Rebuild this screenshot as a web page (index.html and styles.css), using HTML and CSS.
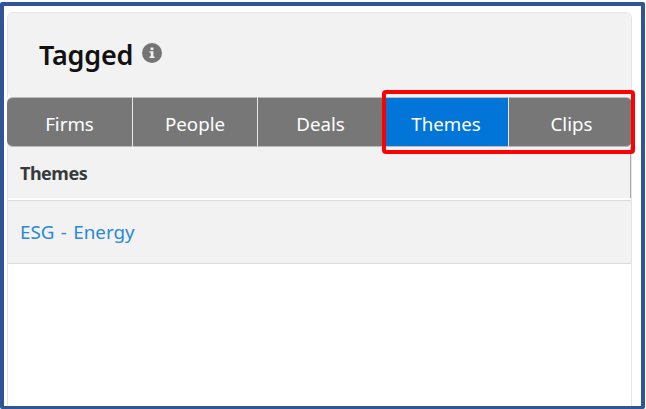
FILE: index.html
```html
<!DOCTYPE html>
<html lang="en">
<head>
<meta charset="utf-8">
<title>Tagged</title>
<link rel="stylesheet" href="styles.css">
</head>
<body>
<main class="frame">
  <section class="card">
    <header class="card-header">
      <h1 class="title">Tagged</h1>
      <svg class="info" viewBox="0 0 20 20" aria-hidden="true">
        <circle cx="10" cy="10" r="10" fill="#747474"/>
        <path d="M8.6 4.6h2.8v2.3H8.6zM7.5 8.2h3.9v5.3h1.2v1.6H7.5v-1.6h1.3V9.8H7.5z" fill="#f2f2f2"/>
      </svg>
    </header>
    <nav class="tabs">
      <a class="tab">Firms</a>
      <a class="tab">People</a>
      <a class="tab">Deals</a>
      <a class="tab active">Themes</a>
      <a class="tab">Clips</a>
      <span class="highlight"></span>
    </nav>
    <div class="column-head">Themes</div>
    <div class="row"><a class="link">ESG - Energy</a></div>
  </section>
</main>
</body>
</html>
```
FILE: styles.css
```css
* { box-sizing: border-box; }
body {
  margin: 0;
  height: 409px;
  padding: 2px 1px 0 0;
  overflow: hidden;
  background: #fff;
  font-family: "Noto Sans", "Open Sans", sans-serif;
}
.frame {
  height: 407px;
  padding: 6px 9px 0 3px;
  border: 4px solid #2f5597;
  border-bottom-width: 3px;
  border-radius: 2px;
}
.card {
  height: 394px;
  border: solid #e4e4e4;
  border-width: 1px 1px 0;
  border-radius: 6px 6px 0 0;
}
.card-header {
  display: flex;
  align-items: flex-start;
  height: 84px;
  padding: 23px 0 0 31px;
  background: #f2f2f2;
  border-radius: 5px;
}
.title {
  margin: 0;
  color: #111;
  font-size: 27px;
  font-weight: 650;
  letter-spacing: -0.2px;
  line-height: 38px;
}
.info {
  width: 20px;
  height: 20px;
  margin: 7px 0 0 9px;
}
.tabs {
  position: relative;
  display: grid;
  grid-template-columns: 126px 125px 126px 125px 123px;
  grid-template-rows: 50px;
  height: 50px;
  margin: 0 -1px;
  background: #f2f2f2;
}
.tab {
  padding-top: 1px;
  height: 50px;
  background: #777;
  border: solid #bbb;
  border-width: 1px 1px 1px 0;
  border-right-color: #e8e8e8;
  color: #fff;
  font-size: 18.7px;
  line-height: 50px;
  text-align: center;
}
.tab:first-of-type { border-radius: 6px 0 0 6px; }
.tab:last-of-type { border-radius: 0 6px 6px 0; border-right: 0; padding-left: 2px; }
.tab.active { background: #0275d8; }
.highlight {
  position: absolute;
  top: -7px;
  left: 375px;
  width: 253px;
  height: 64px;
  border: 4px solid #f00;
  border-radius: 4px;
}
.column-head {
  height: 51px;
  padding-left: 12px;
  background: #f2f2f2;
  border-right: 1px solid #aaa;
  color: #373a3c;
  font-size: 18px;
  font-weight: 700;
  letter-spacing: -0.5px;
  line-height: 52px;
}
.row {
  height: 64px;
  margin-top: 2px;
  padding-left: 12px;
  background: #f2f2f2;
  border: solid #dcdcdc;
  border-width: 1px 0;
  color: #2b88d8;
  font-size: 18.8px;
  line-height: 63px;
  word-spacing: 1.5px;
}
```
